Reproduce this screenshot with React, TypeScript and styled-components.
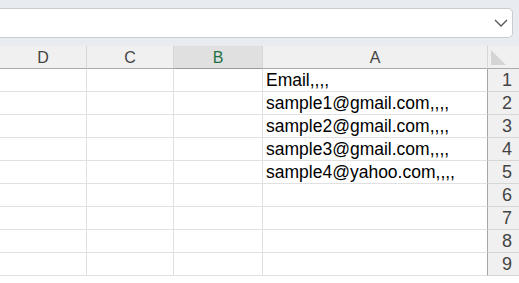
import React from 'react';
import styled, { createGlobalStyle } from 'styled-components';

const GlobalStyle = createGlobalStyle`
    html, body {
        margin: 0;
        padding: 0;
        background: #fff;
        overflow: hidden;
    }
    body {
        font-family: "Liberation Sans", Arial, sans-serif;
    }
`;

const columns = [
    { name: 'D', width: 87 },
    { name: 'C', width: 87 },
    { name: 'B', width: 89, selected: true },
    { name: 'A', width: 225 },
];

const rows = [
    'Email,,,,',
    'sample1@gmail.com,,,,',
    'sample2@gmail.com,,,,',
    'sample3@gmail.com,,,,',
    'sample4@yahoo.com,,,,',
    '',
    '',
    '',
    '',
];

const template = `${columns.map((c) => `${c.width}px`).join(' ')} 1fr`;

const Page = styled.div`
    width: 519px;
    height: 283px;
    background: #fff;
    display: flex;
    flex-direction: column;
`;

const TopBand = styled.div`
    background: #e8ebef;
    padding: 8px 6px 8px 0;
`;

const FormulaBox = styled.div`
    height: 28px;
    background: #fff;
    border: 1px solid #c9cbce;
    border-left: none;
    border-radius: 0 5px 5px 0;
    display: flex;
    align-items: center;
    justify-content: flex-end;
    padding-right: 4px;
    svg {
        display: block;
    }
`;

const Sheet = styled.div`
    display: grid;
    grid-template-columns: ${template};
    grid-auto-rows: 23px;
`;

const ColHead = styled.div<{ $selected?: boolean }>`
    box-sizing: border-box;
    background: ${(p) => (p.$selected ? '#e0e0e0' : '#f0f0f0')};
    border-right: 1px solid #d6d6d6;
    border-bottom: 1px solid ${(p) => (p.$selected ? '#999' : '#ababab')};
    color: ${(p) => (p.$selected ? '#1e7145' : '#444')};
    font-size: 16px;
    line-height: 22px;
    padding-top: 1px;
    text-align: center;
`;

const Corner = styled.div`
    box-sizing: border-box;
    background: #f0f0f0;
    border-bottom: 1px solid #ababab;
    padding: 4px 0 0 3px;
    svg {
        display: block;
    }
`;

const Cell = styled.div<{ $last?: boolean }>`
    box-sizing: border-box;
    border-right: 1px solid ${(p) => (p.$last ? '#a6a6a6' : '#e1e1e1')};
    border-bottom: 1px solid #e1e1e1;
    color: #000;
    font-size: 17.5px;
    line-height: 22px;
    padding-left: 3px;
    white-space: nowrap;
    overflow: hidden;
`;

const RowNum = styled.div`
    box-sizing: border-box;
    background: #f0f0f0;
    border-bottom: 1px solid #d6d6d6;
    color: #444;
    font-size: 18px;
    line-height: 22px;
    padding-right: 7px;
    text-align: right;
`;

function Chevron() {
    return (
        <svg width="14" height="8" viewBox="0 0 14 8">
            <polyline points="1,1 7,7 13,1" fill="none" stroke="#555" strokeWidth="1.3" />
        </svg>
    );
}

function CornerMark() {
    return (
        <svg width="15" height="15" viewBox="0 0 15 15">
            <polygon points="0,0 0,15 15,15" fill="#d4d4d4" />
        </svg>
    );
}

export default function App(): React.ReactElement {
    return (
        <Page>
            <GlobalStyle />
            <TopBand>
                <FormulaBox>
                    <Chevron />
                </FormulaBox>
            </TopBand>
            <Sheet>
                {columns.map((c) => (
                    <ColHead key={c.name} $selected={c.selected}>{c.name}</ColHead>
                ))}
                <Corner>
                    <CornerMark />
                </Corner>
                {rows.map((text, i) => (
                    <React.Fragment key={i}>
                        <Cell />
                        <Cell />
                        <Cell />
                        <Cell $last>{text}</Cell>
                        <RowNum>{i + 1}</RowNum>
                    </React.Fragment>
                ))}
            </Sheet>
        </Page>
    );
}
